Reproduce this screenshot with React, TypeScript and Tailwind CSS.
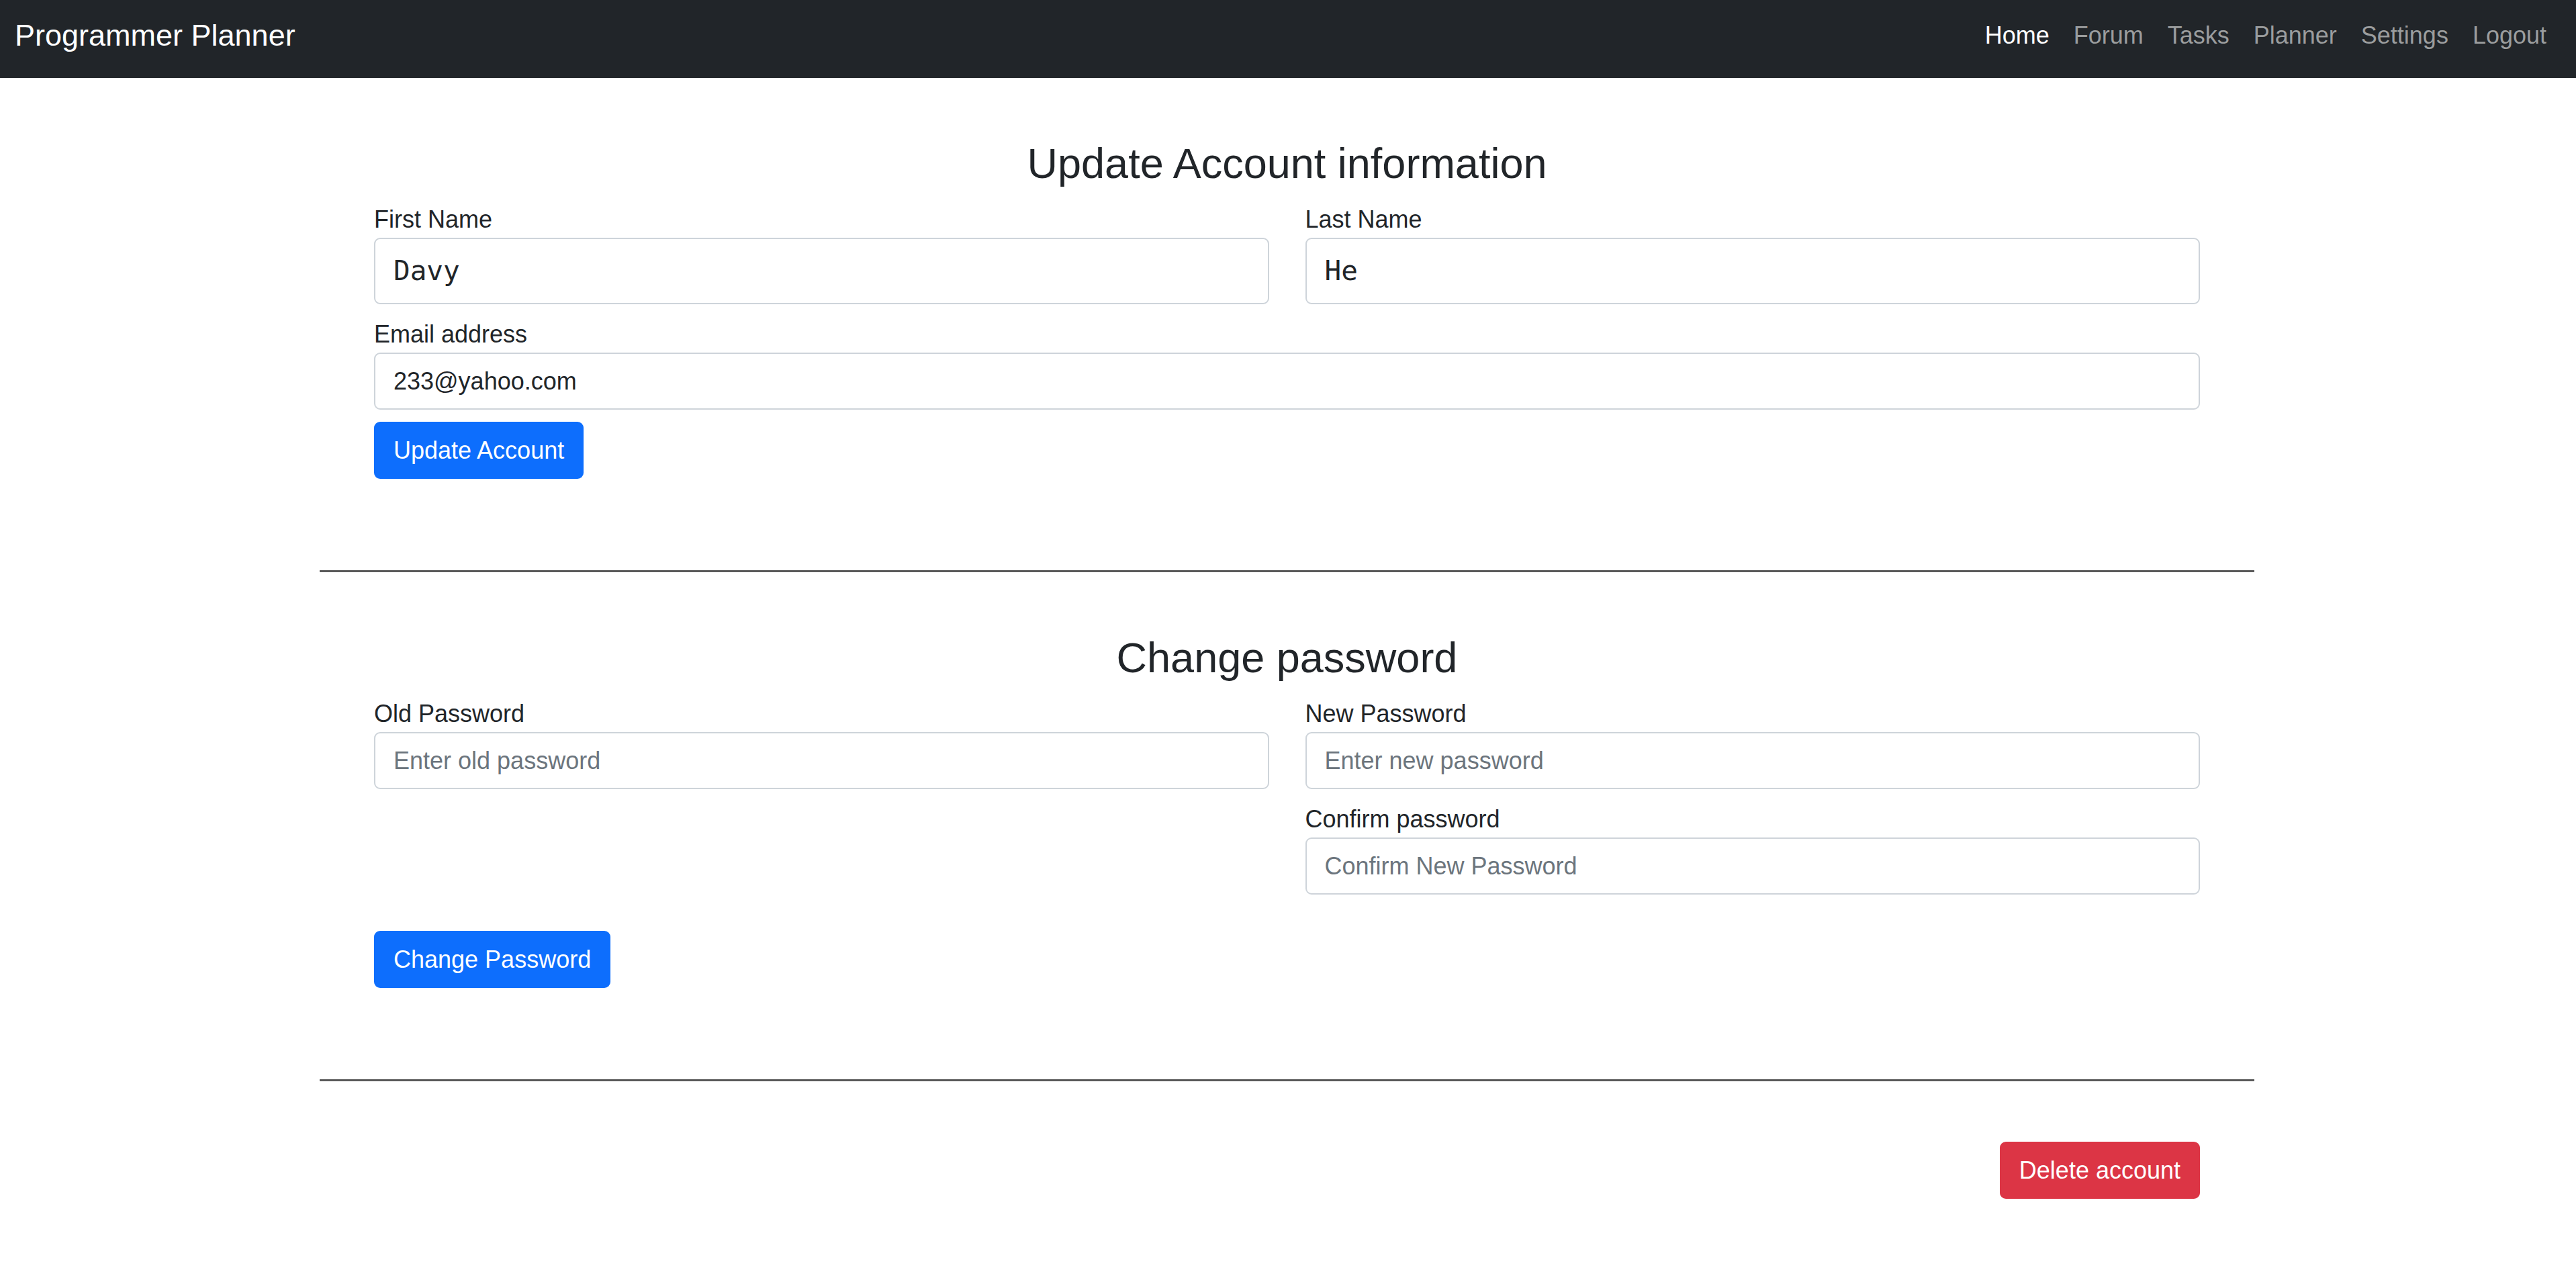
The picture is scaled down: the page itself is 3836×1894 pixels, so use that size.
import { useState } from "react";

const navLinks = ["Home", "Forum", "Tasks", "Planner", "Settings", "Logout"];

const controlBase =
  "block w-full rounded-[9px] border-2 border-[#ced4da] bg-white px-[27px] py-[13px] text-[#212529] placeholder:text-[#6c757d] placeholder:opacity-100 focus:border-[#86b7fe] focus:outline-none";

type FieldProps = {
  id: string;
  label: string;
  type?: string;
  initial?: string;
  placeholder?: string;
  mono?: boolean;
  className?: string;
};

function Field({ id, label, type = "text", initial = "", placeholder, mono = false, className = "" }: FieldProps) {
  const [value, setValue] = useState(initial);
  const font = mono
    ? "font-['DejaVu_Sans_Mono',monospace] text-[41px] leading-[69px]"
    : "text-[36px] leading-[55px]";
  return (
    <div className={className}>
      <label htmlFor={id} className="block">
        {label}
      </label>
      <input
        id={id}
        type={type}
        value={value}
        placeholder={placeholder}
        onChange={(e) => setValue(e.target.value)}
        className={`${controlBase} ${font}`}
      />
    </div>
  );
}

function SectionTitle({ children }: { children: string }) {
  return <h3 className="mb-5 text-center text-[63px] leading-[74px]">{children}</h3>;
}

const buttonBase = "rounded-[9px] px-[29px] py-[15px] text-[36px] leading-[55px] text-white";

export default function App() {
  return (
    <div className="min-h-screen bg-white font-['Liberation_Sans',Arial,sans-serif] text-[36px] leading-[54px] text-[#212529]">
      <nav className="flex flex-wrap items-center justify-between bg-[#212529] pt-[19px] pr-[26px] pb-[29px] pl-[22px]">
        <a href="#" className="text-[45px] leading-[68px] text-white">
          Programmer Planner
        </a>
        <ul className="flex flex-wrap">
          {navLinks.map((name) => (
            <li key={name}>
              <a
                href={`#${name.toLowerCase()}`}
                className={name === "Home" ? "block px-[18px] text-white" : "block px-[18px] text-[#9b9d9e]"}
              >
                {name}
              </a>
            </li>
          ))}
        </ul>
      </nav>

      <main className="pr-[3px]">
        <div className="mx-auto w-full max-w-[2881px]">
          <form className="px-[81px] pt-[90px] pb-[136px]" onSubmit={(e) => e.preventDefault()}>
            <SectionTitle>Update Account information</SectionTitle>
            <div className="grid grid-cols-2 gap-x-[54px] gap-y-[18px]">
              <Field id="first-name" label="First Name" initial="Davy" mono />
              <Field id="last-name" label="Last Name" initial="He" mono />
              <Field id="email" label="Email address" type="email" initial="233@yahoo.com" className="col-span-2" />
            </div>
            <div className="mt-[18px] flex">
              <button type="submit" className={`${buttonBase} bg-[#0d6efd]`}>
                Update Account
              </button>
            </div>
          </form>

          <hr className="h-[3px] border-0 bg-[#595959]" />

          <form className="px-[81px] pt-[90px] pb-[136px]" onSubmit={(e) => e.preventDefault()}>
            <SectionTitle>Change password</SectionTitle>
            <div className="grid grid-cols-2 gap-x-[54px] gap-y-[18px]">
              <Field id="old-password" label="Old Password" type="password" placeholder="Enter old password" />
              <Field id="new-password" label="New Password" type="password" placeholder="Enter new password" />
              <Field
                id="confirm-password"
                label="Confirm password"
                type="password"
                placeholder="Confirm New Password"
                className="col-start-2"
              />
            </div>
            <div className="mt-[54px] flex">
              <button type="submit" className={`${buttonBase} bg-[#0d6efd]`}>
                Change Password
              </button>
            </div>
          </form>

          <hr className="h-[3px] border-0 bg-[#595959]" />

          <div className="flex justify-end px-[81px] pt-[90px]">
            <button type="button" className={`${buttonBase} bg-[#dc3545]`}>
              Delete account
            </button>
          </div>
        </div>
      </main>
    </div>
  );
}
